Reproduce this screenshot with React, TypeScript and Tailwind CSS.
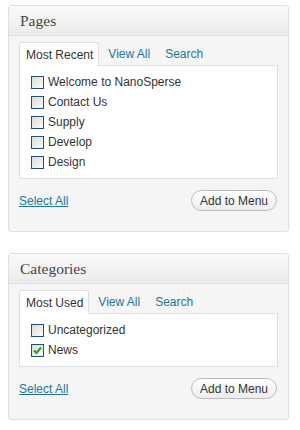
import React from "react";

type Item = { label: string; checked?: boolean };

function Checkbox({ checked }: { checked?: boolean }) {
  return (
    <span className="w-[13px] h-[13px] border border-[#1c5180] bg-gradient-to-br from-[#dcdcd4] to-[#fbfbfb] flex items-center justify-center shrink-0">
      {checked && (
        <svg width="9" height="9" viewBox="0 0 9 9">
          <path d="M1 4.5 L3.5 7 L8 1.5" fill="none" stroke="#21a121" strokeWidth="2" />
        </svg>
      )}
    </span>
  );
}

function Panel({ title, tabs, items }: { title: string; tabs: string[]; items: Item[] }) {
  return (
    <div className="w-[281px] ml-2 border border-[#dfdfdf] rounded-[3px] bg-[#f5f5f5] overflow-hidden">
      <div className="h-[30px] border-b border-[#dfdfdf] bg-gradient-to-b from-[#f9f9f9] to-[#ececec] flex items-center pl-[11px]">
        <span className="text-[15.5px] text-[#464646]" style={{ fontFamily: '"Liberation Serif", Georgia, serif' }}>
          {title}
        </span>
      </div>
      <div className="px-[10px] pt-[6px] pb-[20px]">
        <div className="flex h-[23px] gap-[3px] items-start relative z-10">
          {tabs.map((t, i) =>
            i === 0 ? (
              <div key={t} className="h-[24px] border border-b-0 border-[#dfdfdf] bg-white rounded-t-[3px] pl-[6px] pr-[5px] flex items-center text-[#333]">
                {t}
              </div>
            ) : (
              <div key={t} className="h-[23px] px-[6px] flex items-center text-[#21759b]">
                {t}
              </div>
            )
          )}
        </div>
        <div className="border border-[#dfdfdf] bg-white pl-[11px] pt-[6px] pb-[6px]">
          {items.map((it) => (
            <div key={it.label} className="h-[20px] flex items-center gap-[4px] text-[#333]">
              <Checkbox checked={it.checked} />
              <span>{it.label}</span>
            </div>
          ))}
        </div>
        <div className="mt-[11px] flex items-center justify-between">
          <span className="text-[#21759b] underline">Select All</span>
          <button className="h-[21px] rounded-full border border-[#bbbbbb] bg-gradient-to-b from-white to-[#ededed] px-[8px] text-[#333] text-[12px] mr-[1px]">
            Add to Menu
          </button>
        </div>
      </div>
    </div>
  );
}

export default function App() {
  return (
    <div className="w-[300px] h-[430px] bg-white pt-[5px] text-[12px]" style={{ fontFamily: '"Liberation Sans", Arial, sans-serif' }}>
      <Panel
        title="Pages"
        tabs={["Most Recent", "View All", "Search"]}
        items={[
          { label: "Welcome to NanoSperse" },
          { label: "Contact Us" },
          { label: "Supply" },
          { label: "Develop" },
          { label: "Design" },
        ]}
      />
      <div className="h-[21px]" />
      <Panel
        title="Categories"
        tabs={["Most Used", "View All", "Search"]}
        items={[{ label: "Uncategorized" }, { label: "News", checked: true }]}
      />
    </div>
  );
}
